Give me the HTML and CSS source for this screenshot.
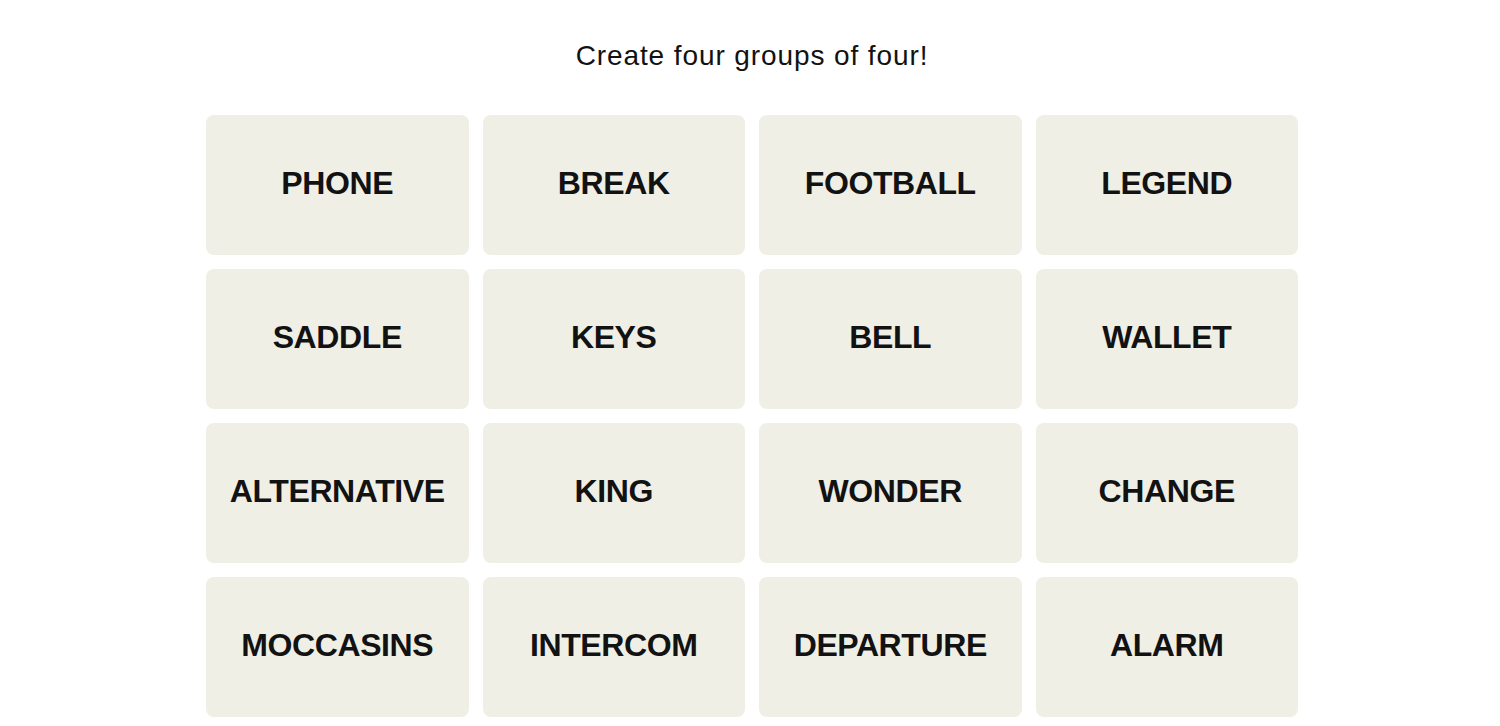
FILE: index.html
```html
<!DOCTYPE html>
<html lang="en">
<head>
    <meta charset="UTF-8">
    <meta name="viewport" content="width=device-width, initial-scale=1.0">
    <title>Connections</title>
    <link rel="stylesheet" href="styles.css">
</head>
<body>
    <div class="juego">
        <p class="titulo">Create four groups of four!</p>
        <div class="tablero">
            <div class="carta">PHONE</div>
            <div class="carta">BREAK</div>
            <div class="carta">FOOTBALL</div>
            <div class="carta">LEGEND</div>
            <div class="carta">SADDLE</div>
            <div class="carta">KEYS</div>
            <div class="carta">BELL</div>
            <div class="carta">WALLET</div>
            <div class="carta">ALTERNATIVE</div>
            <div class="carta">KING</div>
            <div class="carta">WONDER</div>
            <div class="carta">CHANGE</div>
            <div class="carta">MOCCASINS</div>
            <div class="carta">INTERCOM</div>
            <div class="carta">DEPARTURE</div>
            <div class="carta">ALARM</div>
        </div>
    </div>
</body>
</html>
```

FILE: styles.css
```css
body{
    margin: 0;
    background-color: #ffffff;
    font-family: "Liberation Sans", Arial, sans-serif;
    color: #121212;
}
.juego{
    display: flex;
    flex-direction: column;
    align-items: center;
    padding-left: 4px;
}
.titulo{
    margin: 37px 0 0 0;
    font-size: 28px;
    line-height: 38px;
    letter-spacing: 0.9px;
}
.tablero{
    display: grid;
    grid-template-columns: repeat(4, 1fr);
    width: 1092px;
    grid-auto-rows: 140px;
    gap: 14px;
    margin-top: 40px;
}
.carta{
    display: flex;
    align-items: center;
    justify-content: center;
    background-color: #efefe6;
    border-radius: 8px;
    font-weight: bold;
    font-size: 32px;
    letter-spacing: -0.4px;
    padding-bottom: 3px;
}
```
